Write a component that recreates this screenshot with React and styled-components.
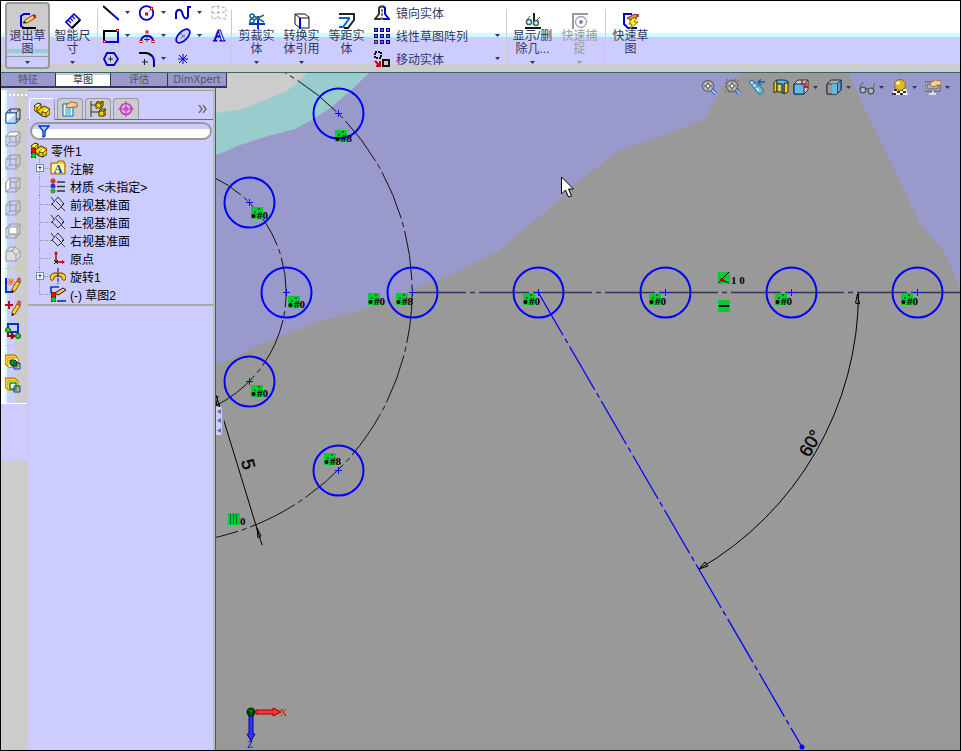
import React, { useState } from "react";
import styled, { createGlobalStyle, css } from "styled-components";

const NAVY = "#333366";
const INK = "#0000cc";

/* ---------- icons ---------- */

const Cube = ({ face, stroke = "#999" }) => (
  <>
    <path d="M1 5h10v10H1zM1 5l4-4h10v10l-4 4M15 1l-4 4M5 1v10h10M5 11l-4 4" fill="none" stroke={stroke} />
    {face && <path d={face} fill="#fff" stroke={stroke} />}
  </>
);

const Pencil = () => (
  <>
    <path d="M7 12l5-8 3 2-5 8-3 2z" fill="#fc3" stroke="#630" strokeWidth="0.8" />
    <path d="M12 4l1-3h2l1 2-1 3z" fill="#c66" stroke="#933" strokeWidth="0.6" />
    <path d="M7 16v-3l2 1z" fill="#000" />
  </>
);

const Part = () => (
  <>
    <path d="M0 4l4-3 3 1v4l3-2 2 1 4 2v5l-4 3-4-1-8-6z" fill="#fc0" stroke="#330" />
    <path d="M0 4l3 2v3l5 4v-3l4 1v4M3 6l4-4M3 9l4-3M8 10l3-3M12 11l4-4" fill="none" stroke="#330" strokeWidth="0.8" />
    <path d="M1 4l3-2 2 1-3 2z" fill="#ff9" />
    <path d="M9 9l2-2 3 1-2 2z" fill="#ff9" />
  </>
);

const Light = ({ x = 1, y = 6 }) => (
  <>
    <rect x={x} y={y} width="5" height="10" fill="#030" />
    <circle cx={x + 2.5} cy={y + 2.5} r="2.4" fill="#f00" />
    <circle cx={x + 2.5} cy={y + 7.5} r="2.4" fill="#0c3" />
  </>
);

const Plane = () => (
  <path d="M8 1l6 7-6 6-6-6zM6 5l5 5M1 1l3 4M11 11l4 4M1 9l2-2M14 7l-2 2" fill="none" stroke="#222" strokeWidth="0.9" />
);

const Lens = () => (
  <>
    <path d="M10 10l5 5" stroke="#36c" strokeWidth="4" />
    <path d="M10 10l5 5" stroke="#9cf" strokeWidth="2" />
    <circle cx="7" cy="7" r="5.5" fill="#bbb" stroke="#666" strokeWidth="1.3" />
    <path d="M7 3v8M3 7h8" stroke="#777" strokeWidth="1.5" />
    <circle cx="7" cy="7" r="2" fill="#fff" stroke="#555" />
  </>
);

const Block = ({ inner }) => (
  <>
    <path d="M0 1h10l3 3v9H3l-3-3z" fill="#fc3" stroke="#960" />
    <path d="M3 4h10v9H3z" fill="#ffc" stroke="#c90" />
    {inner}
    <path d="M9 9h6v6H9z" fill="none" stroke="#03c" />
  </>
);

const redDots = (...pts) =>
  pts.map(([x, y]) => (
    <rect key={`${x}-${y}`} x={x - 1} y={y - 1} width="2" height="2" fill="#fff" stroke="#c00" />
  ));

const icons = {
  exitSketch: (
    <>
      <path d="M10 1H4L1 3v10l3 2" fill="none" stroke="#00c" strokeWidth="2" />
      <path d="M2 15h14" stroke="#000" strokeWidth="2" />
      <path d="M3 10l2-3 8-5 2 3-8 5z" fill="#fc6" stroke="#630" strokeWidth="0.8" />
      <path d="M13 2h2l1 2-1 1z" fill="#f33" stroke="#c00" />
      <path d="M3 10l2-2 1 2z" fill="#000" />
    </>
  ),
  dimension: (
    <>
      <path d="M9 1l6 6-8 8-6-6z" fill="#fff" stroke="#00c" strokeWidth="1.6" />
      <path d="M7 15l8-8" stroke="#000" strokeWidth="2" />
      <path d="M3 7l3 3M5 5l3 3M7 3l3 3" stroke="#00c" strokeWidth="1.2" />
    </>
  ),
  line: (
    <>
      <path d="M0 1l8 7" stroke="#000" strokeWidth="2" />
      <path d="M8 8l8 7" stroke={INK} strokeWidth="2" />
    </>
  ),
  circle: (
    <>
      <circle cx="7.5" cy="8" r="6.8" fill="none" stroke={INK} strokeWidth="1.8" />
      <path d="M8 9l4-5" stroke="#c00" strokeDasharray="1 1" />
      {redDots([7.5, 9], [12.5, 3.5])}
    </>
  ),
  spline: <path d="M1 14V9c0-4 4-6 6-2 2 9 6 7 6 4V2h3" fill="none" stroke={INK} strokeWidth="2" />,
  gridPlane: (
    <path d="M1 2l6-1 8 2v11l-7-1-7 1zM7 1v12M1 8l14-1" fill="none" stroke="#aaa" strokeDasharray="3 2" />
  ),
  rect: (
    <>
      <path d="M1 14V3h14" fill="none" stroke="#000" strokeWidth="2" />
      <path d="M15 3v11H1" fill="none" stroke={INK} strokeWidth="2" />
      {redDots([1.5, 13.5], [14.5, 2.5])}
    </>
  ),
  arc: (
    <>
      <path d="M2 12A6.500 7 0 0 1 14 12" fill="none" stroke={INK} strokeWidth="2" />
      <path d="M8 9v5M5 11.500h6" stroke="#333" />
      {redDots([2, 13.5], [8, 4], [14, 13.5])}
    </>
  ),
  ellipse: (
    <g transform="rotate(-45 8 8)">
      <ellipse cx="8" cy="8" rx="8.5" ry="4.5" fill="#ccf" stroke={INK} strokeWidth="1.7" />
      <path d="M5 8h6M8 5v6" stroke="#333" strokeDasharray="1 1" />
    </g>
  ),
  letter: (
    <text x="8" y="13" textAnchor="middle" fontFamily="Liberation Serif, serif" fontWeight="700" fontSize="16" fill="#fff" stroke={INK}>
      A
    </text>
  ),
  polygon: (
    <>
      <path d="M4 2h7l4 6-4 6H4L1 8z" fill="#ccf" stroke={INK} strokeWidth="1.8" />
      <path d="M7.500 5.500v5M5 8h5" stroke="#222" />
    </>
  ),
  fillet: (
    <>
      <path d="M0 2h7c2 0 4 1 6 3" fill="none" stroke="#000" strokeWidth="2" />
      <path d="M12 4c3 2 3 5 3 7v5" fill="none" stroke={INK} strokeWidth="2" />
      <path d="M5.500 8v6M3 11h6" stroke="#222" />
    </>
  ),
  point: <path d="M8 3v10M3 8h10M4 4l8 8M12 4l-8 8" stroke={INK} />,
  trim: (
    <>
      <path d="M0 11h16M9 3v13" stroke="#03c" strokeWidth="2" />
      <path d="M5 7l10-5M5 3l10 6" stroke="#366" strokeWidth="1.6" />
      <circle cx="3" cy="3" r="2" fill="none" stroke="#069" strokeWidth="1.5" />
      <circle cx="3" cy="8" r="2" fill="none" stroke="#069" strokeWidth="1.5" />
    </>
  ),
  convert: (
    <>
      <path d="M1 1h10l4 3v11H6l-5-4z" fill="#fff" stroke="#111" />
      <path d="M1 1l5 4h9M6 5v10" fill="none" stroke="#111" />
      <path d="M6 5v11" stroke="#00c" strokeWidth="2" />
    </>
  ),
  offset: (
    <>
      <path d="M0 1h15v6l-6 8H5" fill="none" stroke="#222" strokeWidth="2" />
      <path d="M0 5h10v1l-6 8H0" fill="none" stroke="#06c" strokeWidth="2" />
    </>
  ),
  mirror: (
    <>
      <path d="M7 1L5 3v6l-4 5h6" fill="none" stroke="#333" strokeWidth="2" />
      <path d="M9 1l2 2v6l4 5H9" fill="none" stroke="#00c" strokeWidth="2" />
      <path d="M8 0v16" stroke="#000" strokeDasharray="3 1" />
    </>
  ),
  pattern: [0.5, 6.5, 12.5].map((y) =>
    [0.5, 6.5, 12.5].map((x) => (
      <rect key={`${x}-${y}`} x={x} y={y} width="3" height="3" fill="#66f" stroke={x === 0.5 && y === 12.5 ? "#333" : "#009"} />
    ))
  ),
  move: (
    <>
      <path d="M1 1h6v6H1z" fill="none" stroke="#111" strokeWidth="2" strokeDasharray="2 1" />
      <path d="M9 9h6v6H9z" fill="#ccc" stroke="#111" strokeWidth="2" />
      <path d="M1 10l5 5M6 10v5H2" fill="none" stroke="#c00" strokeWidth="2" />
    </>
  ),
  relations: (
    <>
      <path d="M9 0v12" stroke="#222" strokeWidth="2" />
      <path d="M0 15h16" stroke="#111" strokeWidth="2" />
      <circle cx="4" cy="9" r="2.6" fill="#cff" stroke="#366" strokeWidth="1.5" />
      <circle cx="11" cy="10" r="2.4" fill="#cff" stroke="#366" strokeWidth="1.5" />
      <path d="M2 7l3-4M12 7l3-3" stroke="#366" />
    </>
  ),
  snap: (
    <>
      <path d="M1 16V1h15" fill="none" stroke="#999" strokeWidth="2" />
      <circle cx="9" cy="9" r="5.5" fill="#fff" stroke="#99c" strokeWidth="1.3" />
      <circle cx="9" cy="9" r="2" fill="#888" />
    </>
  ),
  rapid: (
    <>
      <path d="M9 1H1v10l4 4h9" fill="none" stroke="#00c" strokeWidth="2" />
      <path d="M4 5l8-4 4 2-9 4z" fill="#c96" stroke="#630" />
      <path d="M9 5h5l-3 4h4l-8 7 2-5H6z" fill="#ff0" stroke="#960" />
      <path d="M13 1h3v3h-3z" fill="#c33" />
    </>
  ),

  cubeFront: (
    <>
      <path d="M1 5h10v10H1zM5 1h10v10l-4 4M5 1L1 5M15 1l-4 4M5 1v4M11 11h4" fill="none" stroke="#333" />
      <path d="M1 5h10v10H1z" fill="#fff" stroke="#06c" />
      <path d="M2 14l8-8v8z" fill="#ccf" />
    </>
  ),
  cubeTop: <Cube face="M1 5l4-4h10l-4 4z" />,
  cubeBack: <Cube />,
  cubeLeft: <Cube face="M1 5l4-4v10l-4 4z" />,
  cubeRight: <Cube />,
  cubeBottom: <Cube face="M4 4h8v7H4z" />,
  cubeIso: <path d="M1 5l4-4h5l5 4v6l-4 4H1zM1 5h6l4 4v6M7 5l3-4M11 9l4-4" fill="#ddd" stroke="#999" />,
  newSketch: (
    <>
      <path d="M1 1v14h7" fill="none" stroke="#03c" strokeWidth="2" />
      <path d="M6 1v8M2 5h8M3 2l6 6M9 2L3 8" stroke="#f60" />
      <Pencil />
    </>
  ),
  addPencil: (
    <>
      <path d="M4 1v8M0 5h8" stroke="#c00" strokeWidth="2" />
      <Pencil />
    </>
  ),
  relation: (
    <>
      <path d="M3 1h10v8H3z" fill="none" stroke="#03c" strokeWidth="2" />
      <path d="M3 9v4h5M6 10l3 3-3 3" fill="none" stroke="#900" strokeWidth="2" />
      <circle cx="3" cy="7" r="2.5" fill="#3c3" stroke="#060" />
      <circle cx="13" cy="13" r="2.5" fill="#3c3" stroke="#060" />
    </>
  ),
  blockA: <Block inner={<path d="M5 6h5l2 2v4H7L5 10z" fill="#090" stroke="#030" />} />,
  blockB: <Block inner={<path d="M5 6h6v6H5z" fill="#fff" stroke="#090" strokeWidth="1.5" />} />,

  part: <Part />,
  property: (
    <>
      <path d="M1 3h10v12H1z" fill="#fff" stroke="#069" />
      <path d="M3 7h6M3 9h6M3 11h6M3 13h6" stroke="#09c" />
      <path d="M4 4l5-3 6 1v4h-4l-3 1-3-1z" fill="#fc9" stroke="#963" />
    </>
  ),
  config: (
    <>
      <path d="M1 0v16M1 4h7M1 11h8" stroke="#333" fill="none" />
      <path d="M6 2l2-2h5v5l-2 2H6zM9 10l2-2h5v5l-2 2H9z" fill="#fc0" stroke="#330" />
      <path d="M6 2h5v5M11 2l2-2M9 10h5v5M14 10l2-2" fill="none" stroke="#330" />
    </>
  ),
  target: (
    <>
      <circle cx="8" cy="8" r="5.5" fill="none" stroke="#c3c" strokeWidth="1.7" />
      <circle cx="8" cy="8" r="2" fill="none" stroke="#c3c" />
      <path d="M8 0v16M0 8h16" stroke="#c3c" />
    </>
  ),
  funnel: <path d="M3 3h10L9 8v5l-2 1V8z" fill="#9cf" stroke="#03c" strokeWidth="1.3" />,
  rootPart: (
    <>
      <Part />
      <Light x={0} y={6} />
    </>
  ),
  annotation: (
    <>
      <path d="M1 3h6l1-2h6v2h1v11H1z" fill="#fc3" stroke="#960" />
      <path d="M2 4h12v9H2z" fill="#ff9" />
      <text x="8" y="13" textAnchor="middle" fontFamily="Liberation Serif, serif" fontWeight="700" fontSize="12" fill="#03c">
        A
      </text>
    </>
  ),
  material: (
    <>
      <circle cx="3" cy="3" r="2.5" fill="#c33" />
      <circle cx="3" cy="8" r="2.5" fill="#33c" />
      <circle cx="3" cy="13" r="2.5" fill="#3a3" />
      <path d="M7 4h8M7 8.500h8M7 13h8" stroke="#333" strokeWidth="1.3" />
    </>
  ),
  plane: <Plane />,
  origin: (
    <>
      <path d="M6 2v10h8" fill="none" stroke="#900" strokeWidth="1.4" />
      <path d="M4 4l2-3 2 3zM12 10l3 2-3 2z" fill="#c00" />
      <path d="M4 10l4 4M8 10l-4 4" stroke="#111" />
    </>
  ),
  revolve: (
    <>
      <path d="M4 5h8c3 1 4 3 4 5 0 3-4 3-4 0 0-1-1-2-4-2s-4 1-4 2c0 3-4 3-4 0 0-2 1-4 4-5z" fill="#fc3" stroke="#630" />
      <path d="M8 0v16" stroke="#111" strokeDasharray="4 1" />
    </>
  ),
  sketch: (
    <>
      <path d="M9 1H1v6" fill="none" stroke="#03c" strokeWidth="1.6" />
      <path d="M7 15h9" stroke="#039" strokeWidth="1.6" />
      <path d="M5 7l8-5 3 2-8 5z" fill="#fc6" stroke="#300" />
      <Light x={1} y={6} />
    </>
  ),

  zoomFit: <Lens />,
  zoomArea: (
    <>
      <Lens />
      <path d="M1 1h12v12H1z" fill="none" stroke="#666" strokeDasharray="2 2" />
    </>
  ),
  previous: (
    <>
      <path d="M0 3l3-2 10 8c3 3 0 7-3 6z" fill="#6bd" stroke="#369" />
      <path d="M2 3l8 9" stroke="#cff" strokeWidth="1.5" />
      <path d="M3 6l4-3M6 9l4-3" stroke="#369" />
      <path d="M9 3h7M12 0L9 3l3 3" fill="none" stroke="#06c" strokeWidth="1.3" />
    </>
  ),
  section: (
    <>
      <path d="M1 3l3-2v11l-3 2zM11 4l4-2v11l-4 2z" fill="#fc0" stroke="#330" />
      <path d="M4 1h6c3 0 5 1 5 3H11v10H9V5H4z" fill="#6bd" stroke="#036" />
      <path d="M4 5h5v8H4z" fill="#cc6" stroke="#330" />
    </>
  ),
  orient: (
    <>
      <path d="M1 5l4-4h10v10l-4 4H1z" fill="#ccc" stroke="#333" />
      <path d="M1 5h10v10H1z" fill="#6bd" stroke="#036" />
      <path d="M11 5l4-4" stroke="#333" />
      <path d="M9 1v5M13 4v4M11 8h4" stroke="#c00" strokeWidth="1.3" />
    </>
  ),
  shaded: (
    <>
      <path d="M1 5l4-4h10v10l-4 4H1z" fill="#aaa" stroke="#036" />
      <path d="M11 5l4-4v10l-4 4z" fill="#69d" stroke="#036" />
      <path d="M1 5h10v10H1z" fill="#999" stroke="#333" />
      <path d="M6 5h5v10H6z" fill="#6bd" />
    </>
  ),
  glasses: (
    <>
      <circle cx="4" cy="11" r="2.8" fill="#9cc" stroke="#555" strokeWidth="1.3" />
      <circle cx="12" cy="12" r="2.8" fill="#9cc" stroke="#555" strokeWidth="1.3" />
      <path d="M7 10c1-1 2-1 2 1M1 10c0-5 2-6 4-6M14 10c1-4 1-5 2-6" fill="none" stroke="#555" />
    </>
  ),
  appearance: (
    <>
      <path d="M2 10h12l2 6H0z" fill="#fff" />
      <path d="M2 10h3v2H2zM8 10h3v2H8zM5 12h3v2H5zM11 12h3v2h-3zM0 14h4v2H0zM8 14h3v2H8z" fill="#333" />
      <circle cx="8" cy="6" r="5.5" fill="#db2" stroke="#960" />
      <circle cx="6" cy="4" r="1.8" fill="#ffc" />
    </>
  ),
  scene: (
    <>
      <path d="M0 3h15v9H0z" fill="#ddd" stroke="#444" />
      <path d="M2 5h11v5H2z" fill="#9bc" stroke="#555" />
      <path d="M4 15h7M8 12v2" stroke="#ddd" strokeWidth="2" />
      <path d="M5 4l5-3 6 1v4h-4l-3 2-3-1z" fill="#fc9" stroke="#963" strokeWidth="0.8" />
    </>
  ),
};

const Svg = styled.svg`
  display: block;
  flex: none;
`;

const Icon = ({ name }) => (
  <Svg width="16" height="16" viewBox="0 0 16 16" aria-hidden="true">
    {icons[name]}
  </Svg>
);

const Caret = ({ off }) => (
  <Svg width="5" height="3" viewBox="0 0 5 3" aria-hidden="true">
    <path d="M0 0h5L2.500 3z" fill={off ? "#999" : NAVY} />
  </Svg>
);

/* ---------- data ---------- */

const drawTools = [
  { icon: "line", label: "直线", more: true },
  { icon: "circle", label: "圆", more: true },
  { icon: "spline", label: "样条曲线", more: true },
  { icon: "gridPlane", label: "基准面" },
  { icon: "rect", label: "矩形", more: true },
  { icon: "arc", label: "圆弧", more: true },
  { icon: "ellipse", label: "椭圆", more: true },
  { icon: "letter", label: "文字" },
  { icon: "polygon", label: "多边形" },
  { icon: "fillet", label: "圆角", more: true },
  { icon: "point", label: "点" },
];

const entityTools = [
  { icon: "mirror", label: "镜向实体" },
  { icon: "pattern", label: "线性草图阵列", more: true },
  { icon: "move", label: "移动实体", more: true },
];

const railTools = [
  ["cubeFront", "cubeTop", "cubeBack", "cubeLeft", "cubeRight", "cubeBottom", "cubeIso"],
  ["newSketch", "addPencil", "relation"],
  ["blockA", "blockB"],
];

const tree = [
  { icon: "annotation", label: "注解", open: true },
  { icon: "material", label: "材质 <未指定>" },
  { icon: "plane", label: "前视基准面" },
  { icon: "plane", label: "上视基准面" },
  { icon: "plane", label: "右视基准面" },
  { icon: "origin", label: "原点" },
  { icon: "revolve", label: "旋转1", open: true },
  { icon: "sketch", label: "(-) 草图2" },
];

const viewTools = [
  { icon: "zoomFit" },
  { icon: "zoomArea" },
  { icon: "previous" },
  { icon: "section" },
  { icon: "orient", more: true },
  { icon: "shaded", more: true },
  { icon: "glasses", more: true },
  { icon: "appearance", more: true },
  { icon: "scene", more: true },
];

const holes = [
  [338, 113], [249, 202], [286, 292], [412, 292], [538, 292],
  [665, 292], [791, 292], [917, 292], [249, 381], [338, 470],
];

const badges = [
  [335, 130, 8], [251, 207, 0], [288, 296, 0], [368, 293, 0], [396, 293, 8], [523, 293, 0],
  [649, 293, 0], [775, 293, 0], [901, 293, 0], [251, 385, 0], [324, 453, 8],
];

/* ---------- components ---------- */

function BigTool({ icon, lines, more, pressed, wide, disabled }) {
  return (
    <BigButton $pressed={pressed} $wide={wide} disabled={disabled}>
      <Icon name={icon} />
      <BigLabel>
        {lines.map((line) => (
          <span key={line}>{line}</span>
        ))}
      </BigLabel>
      {more && (
        <MoreArea $pressed={pressed}>
          <Caret off={disabled} />
        </MoreArea>
      )}
    </BigButton>
  );
}

function Ribbon() {
  return (
    <RibbonBar>
      <BigTool icon="exitSketch" lines={["退出草", "图"]} more pressed />
      <BigTool icon="dimension" lines={["智能尺", "寸"]} more />
      <Divider />
      <DrawGrid>
        {drawTools.map((tool) => (
          <DrawButton key={tool.icon} aria-label={tool.label}>
            <Icon name={tool.icon} />
            {tool.more && <Caret />}
          </DrawButton>
        ))}
      </DrawGrid>
      <Divider />
      <BigTool icon="trim" lines={["剪裁实", "体"]} more />
      <BigTool icon="convert" lines={["转换实", "体引用"]} more />
      <BigTool icon="offset" lines={["等距实", "体"]} />
      <EntityList>
        {entityTools.map((tool) => (
          <EntityButton key={tool.icon}>
            <Icon name={tool.icon} />
            <span>{tool.label}</span>
            {tool.more && <Caret />}
          </EntityButton>
        ))}
      </EntityList>
      <Divider />
      <BigTool icon="relations" lines={["显示/删", "除几..."]} more wide />
      <BigTool icon="snap" lines={["快速捕", "捉"]} more wide disabled />
      <Divider />
      <BigTool icon="rapid" lines={["快速草", "图"]} />
    </RibbonBar>
  );
}

function Sidebar() {
  const [tab, setTab] = useState("草图");
  const [filter, setFilter] = useState("");

  return (
    <Side>
      <TabStrip>
        {["特征", "草图", "评估", "DimXpert"].map((name) => (
          <Tab key={name} $active={tab === name} onClick={() => setTab(name)}>
            {name}
          </Tab>
        ))}
      </TabStrip>
      <SideBody>
        <Rail>
          <RailTools>
            <Grip />
            {railTools.map((group) => (
              <RailGroup key={group[0]}>
                {group.map((name) => (
                  <RailButton key={name} aria-label={name}>
                    <Icon name={name} />
                  </RailButton>
                ))}
              </RailGroup>
            ))}
          </RailTools>
          <RailSpace />
        </Rail>
        <Manager>
          <ManagerTabs>
            {["part", "property", "config", "target"].map((name, i) => (
              <ManagerTab key={name} $active={i === 0} aria-label={name}>
                <Icon name={name} />
              </ManagerTab>
            ))}
            <Chevron aria-label="展开">
              <Svg width="9" height="8" viewBox="0 0 9 8">
                <path d="M1 0l3 4-3 4M5 0l3 4-3 4" fill="none" stroke="#666" strokeWidth="1.3" />
              </Svg>
            </Chevron>
          </ManagerTabs>
          <FilterBox>
            <Icon name="funnel" />
            <input aria-label="过滤器" value={filter} onChange={(e) => setFilter(e.target.value)} />
          </FilterBox>
          <Root>
            <Icon name="rootPart" />
            零件1
          </Root>
          <Tree>
            {tree.map((node) => (
              <Node key={node.label}>
                <Branch>{node.open && <Expander aria-label={`展开${node.label}`}>+</Expander>}</Branch>
                <Icon name={node.icon} />
                <span>{node.label}</span>
              </Node>
            ))}
          </Tree>
        </Manager>
      </SideBody>
    </Side>
  );
}

function Drawing() {
  return (
    <Sheet viewBox="216 73 744 677" preserveAspectRatio="xMinYMin slice">
      <rect x="216" y="73" width="744" height="677" fill="#9999cc" />
      <path d="M216 73H369L348 93L330 108L315 118L295 129L268 136L240 145L222 153L216 155z" fill="#99cccc" />
      <path d="M216 73H307L295 85L285 92L243 109L216 113z" fill="#cccccc" />
      <path
        d="M216 365L230 359L253 348L280 336L298 330L320 321L358 311L390 299L412 289L445 278L498 251L531 224L560 199L571 187L617 152L690 125L705 119L723 85L743 73H848L875 130L921 225L943 250L960 288V750H216z"
        fill="#999999"
      />

      <g fill="none" stroke="#111" strokeDasharray="50 4 5 4">
        <path d="M241 53A252 252 0 0 1 203 540" />
        <path d="M213 177A127 127 0 0 1 213 407" strokeDashoffset="17" />
        <path d="M416 292.500H960" stroke={NAVY} strokeWidth="1.300" />
        <path d="M538 292L802 747" stroke="#0000ff" strokeWidth="1.300" />
      </g>
      <circle cx="802" cy="747" r="2.5" fill="#0000ff" />

      <g fill="none" stroke="#000">
        <path d="M216 395L262 545M858.500 293A320 320 0 0 1 699 569" />
        <path d="M857.500 294l-2 9 4 1z" />
        <path d="M699 569l9-3-3-4zM257 528l1 10 3-2z" />
        <path d="M218 396l-2 9h4" />
      </g>

      {badges.map(([x, y]) => (
        <g key={`${x}-${y}`}>
          <rect x={x} y={y} width="12" height="12" fill="#00cc33" />
          <path d={`M${x + 3} ${y + 5}h2M${x + 7} ${y + 2}h2`} stroke="#600" />
        </g>
      ))}
      {holes.map(([x, y]) => (
        <g key={`${x}-${y}`} fill="none" stroke="#0000ff">
          <circle cx={x + 0.5} cy={y + 0.5} r="25" strokeWidth="2" />
          <path d={`M${x - 3} ${y + 0.5}h7M${x + 0.5} ${y - 3}v7`} />
        </g>
      ))}
      {badges.map(([x, y, n]) => (
        <g key={`${x}-${y}`}>
          <circle cx={x + 2.5} cy={y + 9} r="2" />
          <BadgeText x={x + 6} y={y + 12}>#{n}</BadgeText>
        </g>
      ))}

      <rect x="228" y="513" width="12" height="12" fill="#00cc33" />
      <path d="M230.500 514v10M233.500 514v10M236.500 514v10" stroke="#063" />
      <BadgeText x="240" y="525">0</BadgeText>

      <rect x="718" y="272" width="12" height="12" fill="#00cc33" />
      <path d="M729 272l-11 11M722 280l7 3" stroke="#000" />
      <circle cx="722" cy="280" r="2" fill="#cc0000" />
      <BadgeText x="731" y="284">1 0</BadgeText>
      <rect x="718" y="300" width="12" height="12" fill="#00cc33" />
      <path d="M719 306h10" stroke="#000" strokeWidth="2" />

      <DimText transform="translate(809 458) rotate(-60)">60°</DimText>
      <DimText transform="translate(241 461) rotate(75)">5</DimText>

      <path d="M256 710h17v-2l8 4-8 4v-2h-17z" fill="#ff3333" stroke="#990000" />
      <path d="M249 716h4v18h2l-4 7-4-7h2z" fill="#3333ff" stroke="#000099" />
      <circle cx="251" cy="712" r="4.5" fill="#003300" />
      <path d="M249 709l2 3 2-3M251 712v3" fill="none" stroke="#00aa00" />
      <AxisText x="280" y="716" fill="#ff0000">X</AxisText>
      <AxisText x="247" y="748" fill="#0000cc">Z</AxisText>

      <path d="M561.500 177v17l4-4 3 7 3-1-3-7h5z" fill="#fff" stroke="#000" />
    </Sheet>
  );
}

function App() {
  return (
    <>
      <GlobalStyle />
      <Window>
        <Ribbon />
        <Workspace>
          <Sidebar />
          <Canvas>
            <Drawing />
            <Hud>
              {viewTools.map((tool) => (
                <HudButton key={tool.icon} aria-label={tool.icon} $more={tool.more}>
                  <Icon name={tool.icon} />
                  {tool.more && <Caret />}
                </HudButton>
              ))}
            </Hud>
            <Handle aria-label="折叠">
              {[0, 1, 2].map((i) => (
                <Svg key={i} width="4" height="5" viewBox="0 0 4 5">
                  <path d="M4 0v5L0 2.500z" fill="#6666aa" />
                </Svg>
              ))}
            </Handle>
          </Canvas>
        </Workspace>
      </Window>
    </>
  );
}

export default App;

/* ---------- styles ---------- */

const GlobalStyle = createGlobalStyle`
  * {
    box-sizing: border-box;
  }
  body {
    margin: 0;
    font-family: "Liberation Sans", "Noto Sans CJK SC", sans-serif;
    font-size: 12px;
  }
  button {
    margin: 0;
    padding: 0;
    border: none;
    background: none;
    color: inherit;
    font: inherit;
  }
`;

const Window = styled.div`
  display: flex;
  flex-direction: column;
  height: 100vh;
  overflow: hidden;
  border: 1px solid #000;
  background: #cccccc;
`;

const RibbonBar = styled.header`
  display: flex;
  flex: none;
  height: 72px;
  padding-left: 4px;
  border-bottom: 1px solid #336666;
  color: ${NAVY};
  background: linear-gradient(#fff 32px, #ccffff 32px 36px, #ccccff 36px 63px, #cccccc 63px);
`;

const BigButton = styled.button`
  display: flex;
  flex: none;
  flex-direction: column;
  align-items: center;
  width: ${({ $wide }) => ($wide ? "47px" : "45px")};
  height: 67px;
  padding-top: 12px;

  &:disabled {
    color: #999;
  }

  ${({ $pressed }) =>
    $pressed &&
    css`
      padding-top: 9px;
      margin-top: 1px;
      border: 2px solid #999;
      border-radius: 4px;
      background: linear-gradient(#ccc 30px, #ccccff 30px 45px, #99cccc 45px 49px, #ccccff 49px);
    `}
`;

const BigLabel = styled.span`
  display: flex;
  flex-direction: column;
  align-items: center;
  margin-top: 1px;
  line-height: 13px;
  white-space: nowrap;
`;

const MoreArea = styled.span`
  display: flex;
  justify-content: center;
  align-items: center;
  width: 100%;
  height: 12px;
  margin-top: auto;
  ${({ $pressed }) => $pressed && "border-top: 1px solid #999;"}
`;

const Divider = styled.div`
  flex: none;
  width: 1px;
  height: 56px;
  margin: 8px 2px 0;
  background: #cccccc;
`;

const DrawGrid = styled.div`
  display: grid;
  grid-template-columns: repeat(3, 36px) 18px;
  grid-template-rows: repeat(3, 23px);
  padding-left: 3px;
`;

const DrawButton = styled.button`
  display: flex;
  align-items: center;
  gap: 6px;
`;

const EntityList = styled.div`
  flex: none;
  width: 135px;
`;

const EntityButton = styled.button`
  display: flex;
  align-items: center;
  gap: 6px;
  width: 100%;
  height: 23px;
  padding: 0 4px 0 5px;
  text-align: left;

  span {
    flex: 1;
  }
`;

const Workspace = styled.main`
  display: flex;
  flex: 1;
  min-height: 0;
`;

const Side = styled.aside`
  z-index: 1;
  display: flex;
  flex: none;
  flex-direction: column;
  width: 215px;
  border-right: 1px solid #336666;
`;

const TabStrip = styled.nav`
  display: grid;
  grid-template-columns: 55px 55px 57px 59px;
  flex: none;
  width: 226px;
  height: 14px;
`;

const Tab = styled.button`
  border-right: 1px solid ${NAVY};
  border-bottom: 2px solid ${NAVY};
  color: #555566;
  font-family: "DejaVu Sans", "Noto Sans CJK SC", sans-serif;
  font-size: 10px;
  line-height: 12px;
  background: #9999cc;

  ${({ $active }) =>
    $active &&
    css`
      height: 15px;
      color: #333;
      background: linear-gradient(#ccc 2px, #fff 2px);
    `}
`;

const SideBody = styled.div`
  display: flex;
  flex: 1;
  min-height: 0;
  padding-top: 3px;
`;

const Rail = styled.div`
  display: flex;
  flex: none;
  flex-direction: column;
  width: 26px;
`;

const RailTools = styled.div`
  flex: none;
  padding: 4px 0 7px 4px;
  border-bottom: 1px solid #fff;
  background: linear-gradient(to right, #fff 4px, #ccffff 4px 6px, #ccccff 6px 14px, #cccccc 14px);
`;

const Grip = styled.div`
  height: 4px;
  margin-bottom: 6px;
  border-top: 2px dotted #fff;
`;

const RailGroup = styled.div`
  & + & {
    border-top: 1px solid #cccc99;
    margin-top: 3px;
    padding-top: 4px;
  }
`;

const RailButton = styled.button`
  display: flex;
  align-items: center;
  height: 23px;
`;

const RailSpace = styled.div`
  height: 57px;
  background: #ccccff;
`;

const Manager = styled.section`
  flex: 1;
  min-width: 0;
  margin-left: 1px;
  border-top: 1px solid #999;
  border-right: 2px solid #bbb;
  background: #ccccff;
`;

const ManagerTabs = styled.div`
  display: flex;
  align-items: flex-end;
  gap: 2px;
  height: 29px;
  padding-left: 1px;
  border-bottom: 1px solid #666699;
`;

const ManagerTab = styled.button`
  display: flex;
  justify-content: center;
  align-items: center;
  width: 26px;
  height: 21px;
  border: 1px solid #999;
  border-bottom: none;
  border-radius: 4px 4px 0 0;
  background: #cccccc;

  ${({ $active }) =>
    $active &&
    css`
      height: 22px;
      margin-bottom: -1px;
      border-color: #fff #999 #fff #fff;
      background: #ccccff;
    `}
`;

const Chevron = styled.button`
  align-self: center;
  margin: 8px 6px 0 auto;
`;

const FilterBox = styled.label`
  display: flex;
  align-items: center;
  height: 18px;
  margin: 2px 1px 0 2px;
  padding: 0 8px 0 4px;
  border: 2px solid #999;
  border-radius: 9px;
  background: linear-gradient(#ccccff 5px, #fff 5px);

  input {
    flex: 1;
    width: 100%;
    min-width: 0;
    height: 12px;
    padding: 0 4px;
    border: none;
    outline: none;
    background: transparent;
    font: inherit;
  }
`;

const Root = styled.div`
  display: flex;
  align-items: center;
  gap: 4px;
  height: 18px;
  margin-top: 1px;
  padding-left: 3px;
`;

const Tree = styled.ul`
  margin: 0;
  padding: 0 0 1px;
  border-bottom: 2px solid #aaa;
  list-style: none;
`;

const Branch = styled.span`
  position: relative;
  display: flex;
  align-items: center;
  width: 14px;
  height: 18px;

  &::before {
    content: "";
    position: absolute;
    top: 0;
    bottom: 0;
    left: 3px;
    border-left: 1px dotted #999;
  }

  &::after {
    content: "";
    flex: 1;
    margin-left: 4px;
    border-top: 1px dotted #999;
  }
`;

const Node = styled.li`
  display: flex;
  align-items: center;
  height: 18px;
  padding-left: 8px;
  white-space: nowrap;

  > span:last-child {
    margin-left: 4px;
  }

  &:last-child ${Branch}::before {
    bottom: 9px;
  }
`;

const Expander = styled.button`
  z-index: 1;
  width: 8px;
  height: 8px;
  margin-right: -4px;
  border: 1px solid #7788aa;
  font-size: 9px;
  line-height: 6px;
  background: #fff;
`;

const Canvas = styled.div`
  position: relative;
  flex: 1;
  min-width: 0;
  overflow: hidden;
  background: #999999;
`;

const Sheet = styled.svg`
  display: block;
  width: 100%;
  height: 100%;
`;

const BadgeText = styled.text`
  font-family: "Liberation Serif", serif;
  font-size: 11px;
  font-weight: 700;
`;

const DimText = styled.text`
  font-family: "Liberation Sans", sans-serif;
  font-size: 18px;
  stroke: #000;
  stroke-width: 0.4px;
`;

const AxisText = styled.text`
  font-family: "Liberation Serif", serif;
  font-size: 10px;
`;

const Hud = styled.div`
  position: absolute;
  top: 6px;
  right: 2px;
  display: flex;
`;

const HudButton = styled.button`
  display: flex;
  align-items: center;
  gap: 4px;
  width: ${({ $more }) => ($more ? "33px" : "24px")};
  padding-left: ${({ $more }) => ($more ? "0" : "4px")};
  height: 16px;
`;

const Handle = styled.button`
  position: absolute;
  top: 334px;
  left: 0;
  display: flex;
  flex-direction: column;
  justify-content: space-around;
  align-items: center;
  width: 8px;
  height: 28px;
  border-right: 2px solid #999;
  border-radius: 0 3px 3px 0;
  background: #ccccff;
`;
